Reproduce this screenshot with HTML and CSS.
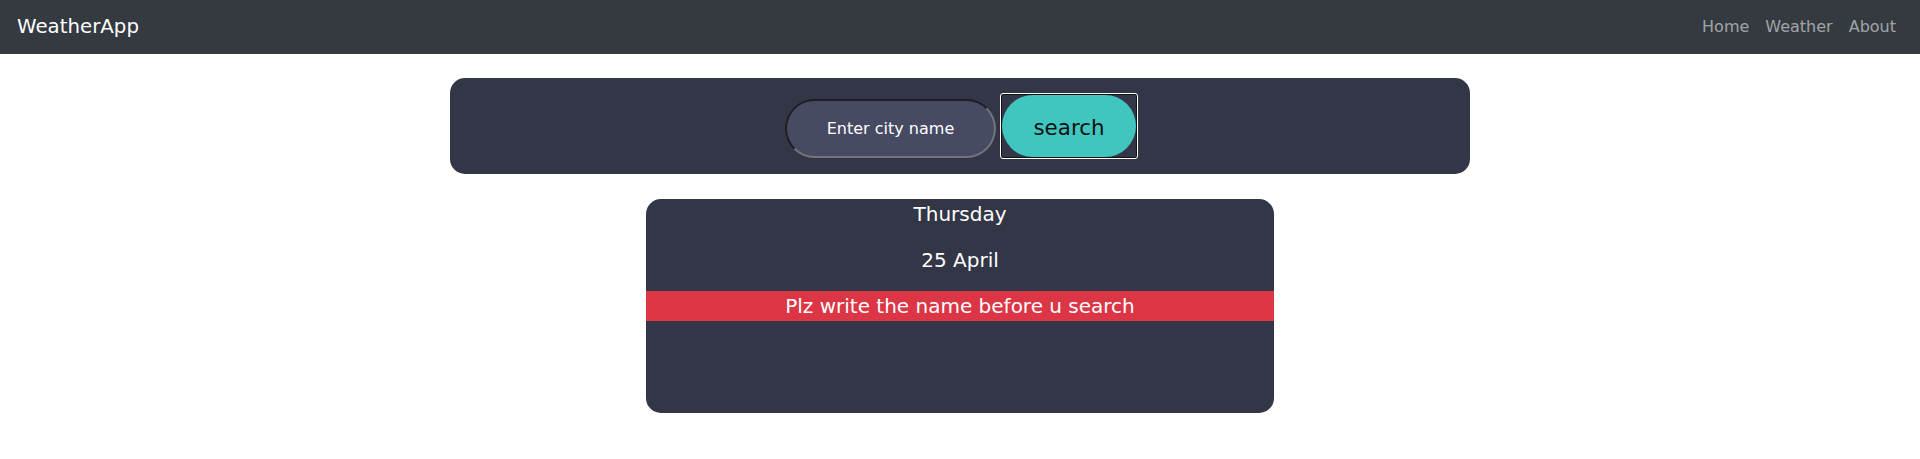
FILE: index.html
```html
<!DOCTYPE html>
<html lang="en">
<head>
<meta charset="utf-8">
<title>WeatherApp</title>
<link rel="stylesheet" href="styles.css">
</head>
<body>
<nav class="navbar">
  <a class="brand" href="#">WeatherApp</a>
  <div class="nav-links">
    <a class="nav-link" href="#">Home</a>
    <a class="nav-link" href="#">Weather</a>
    <a class="nav-link" href="#">About</a>
  </div>
</nav>
<main class="main">
  <section class="search-panel">
    <form class="search-form">
      <input class="city-input" type="text" placeholder="Enter city name">
      <button class="search-btn" type="button"><span class="search-pill">search</span></button>
    </form>
  </section>
  <section class="weather-card">
    <p class="card-line">Thursday</p>
    <p class="card-line">25 April</p>
    <p class="card-line alert">Plz write the name before u search</p>
  </section>
</main>
</body>
</html>
```

FILE: styles.css
```css
* { box-sizing: border-box; }

body {
  margin: 0;
  font-family: "DejaVu Sans", Verdana, sans-serif;
  background: #fff;
}

.navbar {
  height: 54px;
  background: #343a40;
  display: flex;
  align-items: center;
  justify-content: space-between;
  padding: 0 16px;
}

.brand {
  color: #fff;
  text-decoration: none;
  font-size: 19.8px;
  line-height: 30px;
  padding-left: 1px;
}

.nav-links {
  display: flex;
}

.nav-link {
  color: rgba(255, 255, 255, 0.55);
  text-decoration: none;
  font-size: 16px;
  line-height: 24px;
  padding: 0 8px;
}

.main {
  display: flex;
  flex-direction: column;
  align-items: center;
}

.search-panel {
  margin-top: 24px;
  width: 1020px;
  height: 96px;
  background: #333646;
  border-radius: 15px;
  padding: 15px 0 15px 3px;
}

.search-form {
  display: flex;
  justify-content: center;
  align-items: flex-end;
  gap: 4px;
  margin: 0;
}

.city-input {
  width: 211px;
  height: 59px;
  margin-bottom: 1px;
  border-radius: 30px;
  border: 2px solid;
  border-color: #1e1e24 #74747a #74747a #1e1e24;
  background: #474a63;
  color: #fff;
  font-family: "DejaVu Sans", Verdana, sans-serif;
  font-size: 16px;
  text-align: center;
  padding: 0 10px;
}

.city-input::placeholder {
  color: #fff;
  opacity: 1;
}

.search-btn {
  border: 1px solid #fff;
  border-radius: 3px;
  background: #333646;
  box-shadow: inset 0 0 0 1px #111;
  padding: 1px;
  cursor: pointer;
}

.search-pill {
  display: block;
  width: 134px;
  height: 62px;
  border-radius: 31px;
  background: #40c6be;
  color: #111;
  font-family: "DejaVu Sans", Verdana, sans-serif;
  font-size: 21.4px;
  line-height: 62px;
  padding-top: 2px;
  text-align: center;
}

.weather-card {
  margin-top: 25px;
  width: 628px;
  height: 214px;
  background: #333646;
  border-radius: 15px;
  display: flex;
  flex-direction: column;
  gap: 16px;
  color: #fff;
}

.card-line {
  margin: 0;
  font-size: 20px;
  line-height: 30px;
  text-align: center;
}

.alert {
  background: #dc3545;
}
```
